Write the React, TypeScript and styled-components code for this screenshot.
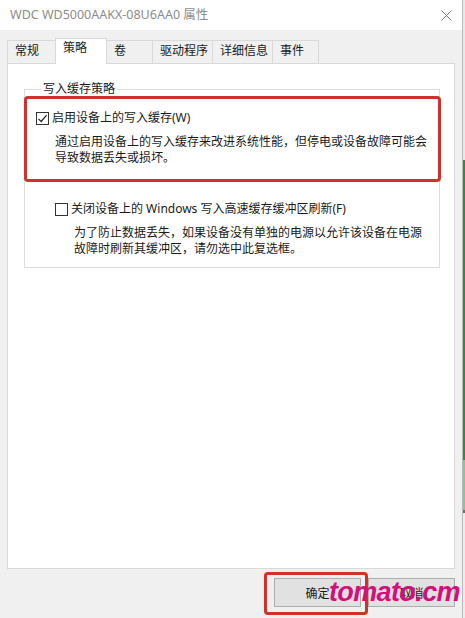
import React from 'react';
import styled, {createGlobalStyle} from 'styled-components';

const GlobalStyle = createGlobalStyle`
  html, body {
    margin: 0;
    padding: 0;
    background: #f0f0f0;
  }
  body {
    font-family: "Noto Sans", "Noto Sans CJK SC", sans-serif;
    font-size: 12px;
    color: #1a1a1a;
  }
`;

interface TabItem {
  label: string;
  width: number;
}

const tabs: TabItem[] = [
  {label: '常规', width: 49},
  {label: '策略', width: 52},
  {label: '卷', width: 47},
  {label: '驱动程序', width: 61},
  {label: '详细信息', width: 61},
  {label: '事件', width: 47},
];

const CheckMark: React.FC = () => (
  <svg width="11" height="11" viewBox="0 0 11 11">
    <path d="M1.5 5.8 L4.2 8.5 L9.6 2.2" fill="none" stroke="#222" strokeWidth="1.2" />
  </svg>
);

const CloseIcon: React.FC = () => (
  <svg width="11" height="11" viewBox="0 0 11 11">
    <path d="M0.5 0.5 L10.5 10.5 M10.5 0.5 L0.5 10.5" stroke="#7a7a7a" strokeWidth="1" />
  </svg>
);

const App: React.FC = () => {
  const selected = 1;

  return (
    <>
      <GlobalStyle />
      <Screen>
        <Window>
          <TitleBar>
            <Title>WDC WD5000AAKX-08U6AA0 属性</Title>
            <CloseIcon />
          </TitleBar>

          <Body>
            <TabRow>
              {tabs.map((tab, i) => (
                <Tab key={tab.label} $width={tab.width} $active={i === selected}>
                  {tab.label}
                </Tab>
              ))}
            </TabRow>

            <Panel>
              <GroupBox>
                <Legend>写入缓存策略</Legend>

                <Option $indent={0} $marked>
                  <OptionRow>
                    <CheckBox>
                      <CheckMark />
                    </CheckBox>
                    <span>启用设备上的写入缓存(W)</span>
                  </OptionRow>
                  <Description>
                    通过启用设备上的写入缓存来改进系统性能，但停电或设备故障可能会导致数据丢失或损坏。
                  </Description>
                </Option>

                <Option $indent={19}>
                  <OptionRow>
                    <CheckBox />
                    <span>关闭设备上的 Windows 写入高速缓存缓冲区刷新(F)</span>
                  </OptionRow>
                  <Description>
                    为了防止数据丢失，如果设备没有单独的电源以允许该设备在电源故障时刷新其缓冲区，请勿选中此复选框。
                  </Description>
                </Option>
              </GroupBox>
            </Panel>

            <Footer>
              <Marked>
                <DialogButton>确定</DialogButton>
              </Marked>
              <DialogButton>取消</DialogButton>
              <Watermark>tomato.cm</Watermark>
            </Footer>
          </Body>
        </Window>
        <EdgeStrip />
      </Screen>
    </>
  );
};

const Screen = styled.div`
  display: flex;
  width: 465px;
  height: 618px;
  overflow: hidden;
`;

const Window = styled.div`
  display: flex;
  flex-direction: column;
  width: 462px;
  height: 618px;
  background: #f0f0f0;
`;

const EdgeStrip = styled.div`
  width: 3px;
  height: 618px;
  border-left: 1px solid #b9b9b9;
  box-sizing: border-box;
  background: linear-gradient(
    to bottom,
    #e9e9e9 0,
    #e9e9e9 160px,
    #2f8c3c 160px,
    #2f8c3c 460px,
    #8cc38f 460px,
    #8cc38f 510px,
    #707070 510px,
    #707070 513px,
    #ececec 513px
  );
`;

const TitleBar = styled.div`
  display: flex;
  align-items: center;
  justify-content: space-between;
  height: 30px;
  padding: 0 10px 0 10px;
  background: #ffffff;
  box-sizing: border-box;
`;

const Title = styled.div`
  font-size: 12.5px;
  color: #8c8c8c;
  line-height: 16px;
`;

const Body = styled.div`
  display: flex;
  flex-direction: column;
  flex: 1;
  padding: 8px 7px 0 7px;
`;

const TabRow = styled.div`
  display: flex;
  align-items: flex-end;
  height: 25px;
  position: relative;
  z-index: 1;
`;

const Tab = styled.div<{$width: number; $active?: boolean}>`
  width: ${({$width}) => $width}px;
  height: ${({$active}) => ($active ? 26 : 23)}px;
  margin-right: -1px;
  margin-bottom: ${({$active}) => ($active ? -1 : 0)}px;
  padding: ${({$active}) => ($active ? '1px' : '2px')} 0 0 7px;
  box-sizing: border-box;
  border: 1px solid #d9d9d9;
  border-bottom: none;
  background: ${({$active}) => ($active ? '#ffffff' : '#f0f0f0')};
  line-height: 16px;
  color: #1a1a1a;
  position: relative;
  z-index: ${({$active}) => ($active ? 2 : 1)};
`;

const Panel = styled.div`
  height: 506px;
  box-sizing: border-box;
  border: 1px solid #d9d9d9;
  background: #ffffff;
  padding: 17px 0 0 16px;
`;

const GroupBox = styled.fieldset`
  width: 416px;
  margin: 0;
  padding: 0 9px 10px 11px;
  box-sizing: border-box;
  border: 1px solid #dcdcdc;
  min-width: 0;
`;

const Legend = styled.legend`
  margin-left: 5px;
  padding: 0 2px;
  line-height: 16px;
  color: #1a1a1a;
`;

const Option = styled.div<{$indent: number; $marked?: boolean}>`
  position: relative;
  margin-left: ${({$indent}) => $indent}px;
  margin-top: ${({$marked}) => ($marked ? 13 : 35)}px;

  ${({$marked}) =>
    $marked &&
    `
    &::after {
      content: '';
      position: absolute;
      top: -14px;
      left: -12px;
      right: -11px;
      bottom: -16px;
      border: 3px solid #d3302b;
      border-radius: 4px;
      pointer-events: none;
    }
  `}
`;

const OptionRow = styled.div`
  display: flex;
  align-items: center;
  gap: 3px;
  line-height: 16px;
`;

const CheckBox = styled.span`
  display: flex;
  align-items: center;
  justify-content: center;
  width: 13px;
  height: 13px;
  box-sizing: border-box;
  border: 1px solid #333333;
  background: #ffffff;
`;

const Description = styled.div`
  margin: 8px 0 0 19px;
  line-height: 16px;
`;

const Footer = styled.div`
  position: relative;
  display: flex;
  justify-content: flex-end;
  align-items: flex-start;
  gap: 7px;
  padding: 9px 0 0 0;
  flex: 1;
`;

const Marked = styled.div`
  position: relative;

  &::after {
    content: '';
    position: absolute;
    top: -6px;
    left: -10px;
    right: -7px;
    bottom: -8px;
    border: 3px solid #d3302b;
    border-radius: 4px;
    pointer-events: none;
  }
`;

const DialogButton = styled.button`
  width: 87px;
  height: 29px;
  box-sizing: border-box;
  border: 1px solid #adadad;
  background: #e1e1e1;
  font-family: "Noto Sans", "Noto Sans CJK SC", sans-serif;
  font-size: 12px;
  color: #1a1a1a;
  padding: 0;
`;

const Watermark = styled.div`
  position: absolute;
  top: 10px;
  right: -5px;
  font-family: "Liberation Sans", sans-serif;
  font-size: 27px;
  font-weight: bold;
  font-style: italic;
  letter-spacing: -0.6px;
  line-height: 27px;
  color: #d40f7a;
  pointer-events: none;
`;

export default App;
